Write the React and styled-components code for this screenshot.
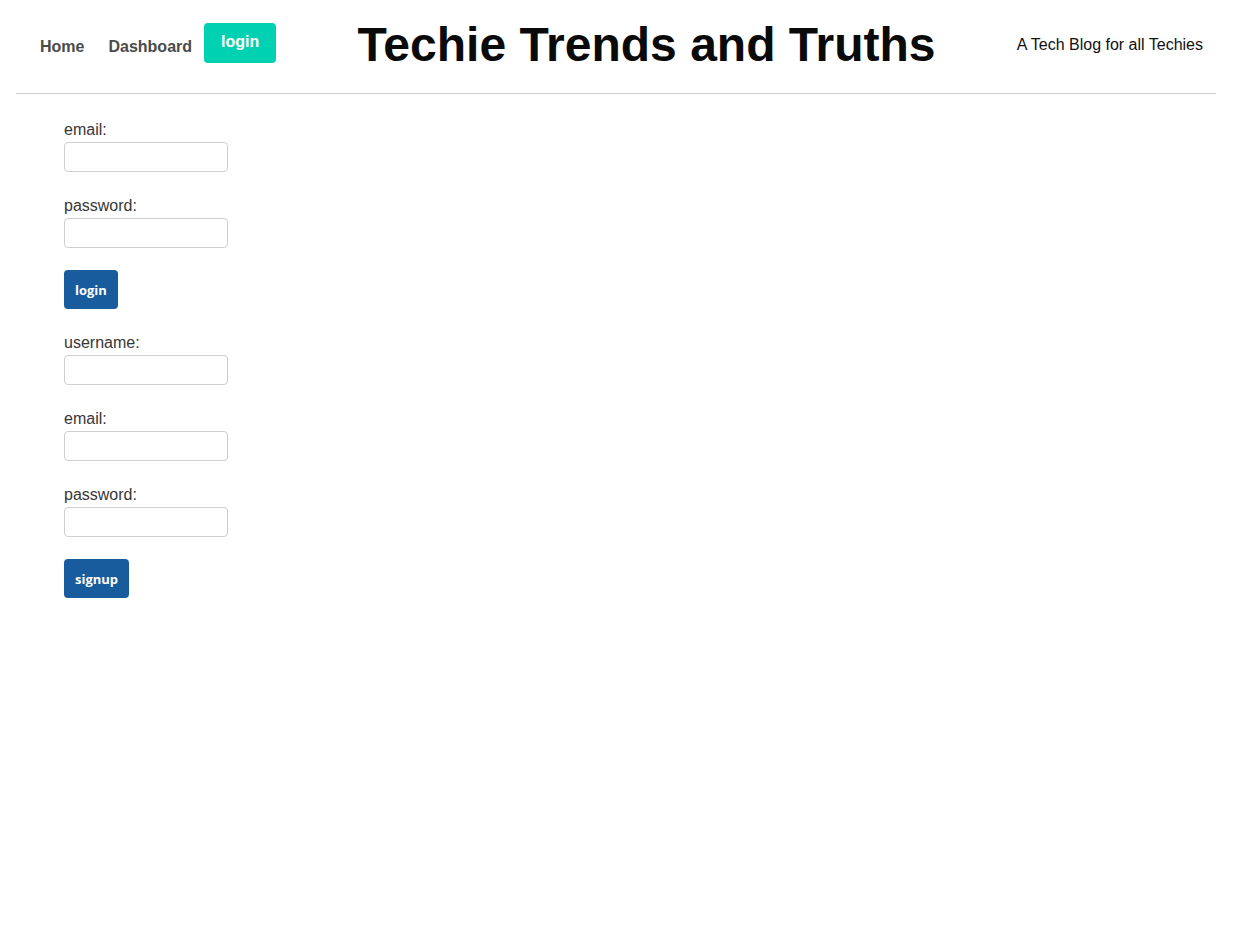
import React from "react";
import styled, { createGlobalStyle } from "styled-components";

const GlobalStyle = createGlobalStyle`
  body {
    margin: 8px;
    background: #fff;
    font-family: "Liberation Sans", Arial, sans-serif;
  }
`;

export default function App() {
  return (
    <>
      <GlobalStyle />
      <Header>
        <Nav>
          <NavLink href="#">Home</NavLink>
          <NavLink href="#">Dashboard</NavLink>
          <NavButton type="button">login</NavButton>
        </Nav>
        <Title>Techie Trends and Truths</Title>
        <Tagline>A Tech Blog for all Techies</Tagline>
      </Header>

      <Main>
        <Form>
          <Field>
            <Label>email:</Label>
            <Input type="text" />
          </Field>
          <Field>
            <Label>password:</Label>
            <Input type="password" />
          </Field>
          <FormButton type="button">login</FormButton>
        </Form>

        <Form>
          <Field>
            <Label>username:</Label>
            <Input type="text" />
          </Field>
          <Field>
            <Label>email:</Label>
            <Input type="text" />
          </Field>
          <Field>
            <Label>password:</Label>
            <Input type="password" />
          </Field>
          <FormButton type="button">signup</FormButton>
        </Form>
      </Main>
    </>
  );
}

const Header = styled.header`
  display: flex;
  align-items: center;
  justify-content: space-between;
  width: 1200px;
  box-sizing: border-box;
  height: 86px;
  margin-left: 8px;
  padding: 0 13px 16px 12px;
  border-bottom: 1px solid #cfcfcf;
`;

const Nav = styled.nav`
  display: flex;
  align-items: center;
`;

const NavLink = styled.a`
  padding: 0 12px;
  font-size: 16px;
  font-weight: 700;
  color: #4a4a4a;
  text-decoration: none;
  line-height: 40px;
  margin-top: 9px;
`;

const NavButton = styled.button`
  height: 40px;
  padding: 0 16px 2px;
  border: 1px solid transparent;
  border-radius: 4px;
  background: #00d1b2;
  color: #fff;
  font-family: "Liberation Sans", Arial, sans-serif;
  font-size: 16px;
  font-weight: 700;
  cursor: pointer;
`;

const Title = styled.h1`
  margin: 4px 0 0;
  font-size: 48px;
  font-weight: 700;
  color: #0a0a0a;
  line-height: 1;
`;

const Tagline = styled.span`
  margin-top: 5px;
  font-size: 16px;
  color: #111;
`;

const Main = styled.main`
  display: flex;
  flex-direction: column;
  gap: 22px;
  padding: 24px 56px;
`;

const Form = styled.form`
  display: flex;
  flex-direction: column;
  align-items: flex-start;
  gap: 22px;
`;

const Field = styled.div`
  display: flex;
  flex-direction: column;
`;

const Label = styled.label`
  font-size: 16px;
  line-height: 24px;
  color: #363636;
`;

const Input = styled.input`
  width: 164px;
  height: 30px;
  box-sizing: border-box;
  border: 1px solid #cfcfcf;
  border-radius: 4px;
  padding: 0 8px;
  font-size: 14px;
`;

const FormButton = styled.button`
  height: 39px;
  padding: 0 11px;
  border: none;
  border-radius: 4px;
  background: #195c9e;
  color: #fff;
  font-family: "Open Sans", sans-serif;
  font-size: 13px;
  font-weight: 700;
  cursor: pointer;
`;
